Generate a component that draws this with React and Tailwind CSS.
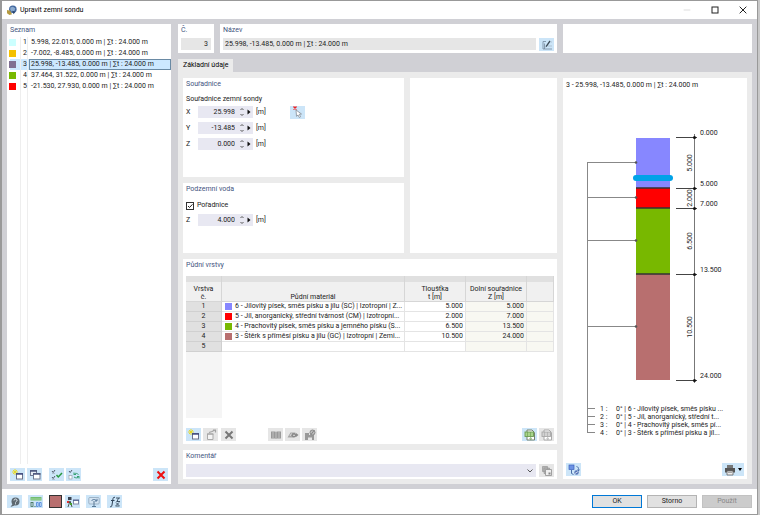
import { clsx } from "clsx"

const probes = [
  { no: 1, color: "bg-[#ccffff]", label: "5.998, 22.015, 0.000 m | ∑t : 24.000 m" },
  { no: 2, color: "bg-[#f5c000]", label: "-7.002, -8.485, 0.000 m | ∑t : 24.000 m" },
  { no: 3, color: "bg-[#7f6e92]", label: "25.998, -13.485, 0.000 m | ∑t : 24.000 m" },
  { no: 4, color: "bg-[#78b800]", label: "37.464, 31.522, 0.000 m | ∑t : 24.000 m" },
  { no: 5, color: "bg-[#ff0000]", label: "-21.530, 27.930, 0.000 m | ∑t : 24.000 m" },
]

const layers = [
  { color: "bg-[#8787ff]", material: "6 - Jílovitý písek, směs písku a jílu (SC) | Izotropní | Z...", t: "5.000", z: "5.000" },
  { color: "bg-[#ff0000]", material: "5 - Jíl, anorganický, střední tvárnost (CM) | Izotropní...", t: "2.000", z: "7.000" },
  { color: "bg-[#78b800]", material: "4 - Prachovitý písek, směs písku a jemného písku (S...", t: "6.500", z: "13.500" },
  { color: "bg-[#b86f6f]", material: "3 - Štěrk s příměsí písku a jílu (GC) | Izotropní | Zemi...", t: "10.500", z: "24.000" },
]

function Svg({ children, size = "h-3 w-3" }) {
  return (
    <svg viewBox="0 0 12 12" className={size} fill="none" aria-hidden="true">
      {children}
    </svg>
  )
}

function ToolButton({ label, disabled, wide, children }) {
  return (
    <button
      type="button"
      aria-label={label}
      disabled={disabled}
      className={clsx(
        "flex h-[13px] shrink-0 items-center justify-center",
        wide ? "w-[22px]" : "w-[15px]",
        disabled ? "bg-[#e6e6e6]" : "bg-[#cce5f8]"
      )}
    >
      {children}
    </button>
  )
}

function Card({ title, className, children }) {
  return (
    <section className={clsx("flex flex-col bg-white px-[3px]", className)}>
      {title && <h2 className="mt-px h-[10px] leading-[10px] text-[#3f5580]">{title}</h2>}
      {children}
    </section>
  )
}

const NewIcon = () => (
  <Svg>
    <path d="M3 0v6M0 3h6M1 1l4 4M5 1l-4 4" stroke="#e8d820" strokeWidth=".9" />
    <rect x="4.5" y="4.5" width="6" height="5.5" fill="#fff" stroke="#6a7088" />
    <path d="M4 5h7" stroke="#38447e" strokeWidth="1.4" />
  </Svg>
)

const NewFromIcon = () => (
  <Svg>
    <path d="M2.500 5h5.500v5.500H2.500z" fill="#f4f4f4" stroke="#aaa" />
    <path d="M2 5h6.500M4 3.500l3-1 3-1.500M8 1h2.500v2.500" stroke="#a2a2a2" strokeWidth="1.200" />
  </Svg>
)

const CopyIcon = () => (
  <Svg>
    <rect x="1.500" y="1.500" width="6" height="5" fill="#e8edf4" stroke="#707890" />
    <path d="M1 2h7" stroke="#44507a" strokeWidth="1.400" />
    <rect x="4.500" y="4.500" width="6.500" height="5.500" fill="#fff" stroke="#707890" />
    <path d="M4 5h7.500" stroke="#44507a" strokeWidth="1.400" />
  </Svg>
)

const CheckAllIcon = () => (
  <Svg>
    <path d="M1 2l1.200 1.500L4 1M1 8l1.200 1.500L4 7" stroke="#505868" />
    <path d="M1 4.500h3M1 10.500h3" stroke="#9aa6b4" strokeWidth=".6" />
    <path d="M5.500 6l1.800 2L11 4" stroke="#2a9a40" strokeWidth="1.500" />
  </Svg>
)

const CheckSwapIcon = () => (
  <Svg>
    <path d="M1 2l1.200 1.500L4 1" stroke="#505868" />
    <rect x="1" y="6.500" width="3" height="3.500" fill="#fff" stroke="#98a2ac" strokeWidth=".7" />
    <path d="M6 5.500c1.500-2 3-1 4.500 0M11 7.500c-1 2-3.500 1.500-5 .5M6 3.500v2h2M11 9.500v-2H9" stroke="#35a070" />
  </Svg>
)

const CrossIcon = ({ color }) => (
  <Svg>
    <path d="M2.500 2.500l7 7M9.500 2.500l-7 7" stroke={color} strokeWidth="2" />
  </Svg>
)

const BookIcon = () => (
  <Svg>
    <path d="M1 2.500h4l1 .5 1-.5h4v7H7l-1 .5-1-.5H1z" fill="#999" />
    <path d="M6 3v7M3 3v6M9 3v6" stroke="#ddd" strokeWidth=".6" />
  </Svg>
)

const EditMatIcon = () => (
  <Svg>
    <path d="M.5 8.500l3-5h5l-2 5z" fill="#a5a5a5" />
    <circle cx="7" cy="6.300" r="2.300" fill="#8a8a8a" />
    <path d="M9 4l2.500 2L9 8z" fill="#8a8a8a" />
    <path d="M3 7l1.500-2.500M6 6.300h2" stroke="#ddd" />
  </Svg>
)

const ImportIcon = () => (
  <Svg>
    <path d="M1 4h4v2h5v5H8V8.500H4V11H1z" fill="#999" />
    <circle cx="8.500" cy="3.500" r="2.500" fill="#bbb" stroke="#8c8c8c" />
    <path d="M6.500 6l4-5" stroke="#888" />
  </Svg>
)

const SheetIcon = ({ active }) => (
  <Svg>
    <path d="M3 1h5l2.500 2.500V11H3z" fill="#fff" stroke={active ? "#76836f" : "#aaa"} />
    <rect x="1" y="3" width="8.500" height="4.500" fill={active ? "#a8d48c" : "#d2d2d2"} stroke={active ? "#6a9c50" : "#a8a8a8"} strokeWidth=".9" />
    <path d="M3.500 3v4.500M6.500 3v4.500" stroke={active ? "#6a9c50" : "#a8a8a8"} strokeWidth=".6" />
    <path d="M6.700 8v2.500M5.500 9.300l1.200 1.200L8 9.300" stroke={active ? "#6a9c50" : "#a8a8a8"} strokeWidth=".7" />
  </Svg>
)

const StackIcon = () => (
  <Svg>
    <path d="M1.500 1.500h5v5h-5zM3 3h5.500v5.500H3z" fill="#b4b4b4" stroke="#989898" strokeWidth=".7" />
    <path d="M4.500 4.500h6v6h-6z" fill="#eee" stroke="#999" strokeWidth=".9" />
    <rect x="7.500" y="7.500" width="2" height="2" fill="#888" />
  </Svg>
)

const EditIcon = () => (
  <Svg>
    <path d="M5 2.500H2v7.500h9M3.500 10V4.500" stroke="#73899c" strokeWidth=".8" />
    <path d="M4.500 8.500l.5-2L8.500 1.500l1 1L6 7.500z" fill="#3e4c58" />
    <path d="M9.500 3h1.500M7 7h4" stroke="#a4b6c4" strokeWidth=".7" />
  </Svg>
)

const PickIcon = () => (
  <Svg>
    <path d="M1.500.5l3 3M4.500.5l-3 3" stroke="#f02020" strokeWidth="1.400" />
    <path d="M4 4l5.500 4-2.300.3 1.400 2.400-1.300.8L6 9l-1.500 1.300z" fill="#fff" stroke="#848c96" strokeWidth=".8" />
  </Svg>
)

const RotateIcon = () => (
  <Svg>
    <rect x="1" y="1" width="5" height="4.500" fill="#6c92e4" stroke="#3a60bc" strokeWidth=".7" />
    <path d="M3.500 6v3.500l2 1M8.500 2.500c2 .5 2 1.500 2 3" stroke="#4a6ea8" />
    <path d="M9 5.500h3L10.500 7.500z" fill="#4a6ea8" />
    <circle cx="8.500" cy="8.500" r="2.200" fill="#5876b8" />
    <path d="M7 9.500l3-2" stroke="#fff" strokeWidth=".7" />
  </Svg>
)

const PrintIcon = () => (
  <Svg>
    <path d="M3 1h6v3H3z" fill="#777" />
    <path d="M1 4h10v4.500H1z" fill="#555" />
    <path d="M3 7h6v4H3z" fill="#eee" stroke="#666" strokeWidth=".8" />
    <path d="M4 8.500h4" stroke="#888" strokeWidth=".7" />
  </Svg>
)

const HelpIcon = () => (
  <Svg>
    <circle cx="6.500" cy="5.500" r="4" fill="#5d6870" />
    <path d="M3.500 8l-2 3 4-1.500z" fill="#5d6870" />
    <path d="M5 4.500c0-2 3-2 3 0 0 1-1.500 1-1.500 2M6.500 7.300v1" stroke="#e8f2fa" />
  </Svg>
)

const UnitsIcon = () => (
  <Svg>
    <rect x=".5" y="1" width="11" height="3.500" fill="#72bd70" />
    <path d="M1 3h10" stroke="#a4d8a0" />
    <rect x="1" y="6.500" width="2" height="4" stroke="#3c6c50" strokeWidth=".8" />
    <path d="M4.500 10.500h1" stroke="#3c6c50" />
    <path d="M6.500 6.500h1.700v4H6.500zM9.500 6.500h1.700v4H9.500z" stroke="#4880d8" strokeWidth=".8" />
  </Svg>
)

const DisplayIcon = () => (
  <Svg>
    <path d="M1 1h3.500v3H1z" fill="#3a4250" />
    <path d="M1 11l2-6 2 6M1 5l4 3" stroke="#404a40" strokeWidth=".9" />
    <rect x="0" y="5" width="2" height="2" fill="#d83030" />
    <rect x="3" y="7" width="2" height="2" fill="#48a030" />
    <rect x="6.500" y="4" width="5" height="4" fill="#fff" stroke="#7e88a4" />
    <path d="M6 4.300h6" stroke="#4c5c90" />
  </Svg>
)

const ViewIcon = () => (
  <Svg>
    <rect x=".8" y="1.500" width="10.400" height="6.500" rx="1" fill="#d4e4f2" stroke="#8fa6ba" strokeWidth=".8" />
    <path d="M6 5v5M4 10.500h4" stroke="#587894" />
    <path d="M3.500 5c1-2 4-2 5 0M9 2.800V5H7" stroke="#486c90" strokeWidth=".9" />
  </Svg>
)

const FormulaIcon = () => (
  <Svg>
    <path d="M6 1.500C4.500.5 4 2 3.800 4L3 9c-.3 2-1 2-2 1.500M2 4.500h3.500" stroke="#2f4358" />
    <path d="M7 2h4M7.500 5.500H11M9.500 2L8 5.500M6.500 10h4M7 6.500l3 3M10 6.500l-3 3" stroke="#2f4358" strokeWidth=".9" />
  </Svg>
)

function TitleBar() {
  return (
    <header className="flex h-[18px] items-center bg-white pl-[5px]">
      <svg viewBox="0 0 12 12" className="h-[10px] w-[10px]" aria-hidden="true">
        <circle cx="7" cy="5" r="4.500" fill="#43689f" />
        <path d="M4 3l3-1 3 2-1 3-3 1-2-2z" fill="#8cabcf" />
        <path d="M0 6l4 1 2 4-3 1-3-2z" fill="#b59a40" />
        <path d="M6 7l4 1-2 3z" fill="#2b466e" />
      </svg>
      <h1 className="ml-[3px] flex-1 text-[7px] text-black">Upravit zemní sondu</h1>
      <button type="button" aria-label="Minimalizovat" className="flex w-7 justify-center">
        <Svg size="h-2 w-2"><path d="M1 6h10" stroke="#ccc" /></Svg>
      </button>
      <button type="button" aria-label="Maximalizovat" className="flex w-7 justify-center">
        <Svg size="h-2 w-2"><rect x="1.500" y="1.500" width="9" height="9" stroke="#222" strokeWidth="1.500" /></Svg>
      </button>
      <button type="button" aria-label="Zavřít" className="flex w-7 justify-center">
        <Svg size="h-2 w-2"><path d="M1 1l10 10M11 1L1 11" stroke="#222" strokeWidth="1.500" /></Svg>
      </button>
    </header>
  )
}

function ProbeList() {
  return (
    <Card title="Seznam" className="w-[164px] shrink-0">
      <ul className="mt-[2px] flex flex-1 flex-col">
        {probes.map((p) => (
          <li
            key={p.no}
            className={clsx("-mr-[3px] flex h-[11px] items-center", p.no === 3 && "bg-[#cce8ff]")}
          >
            <span className={clsx("-ml-px h-[7px] w-[7px]", p.color)} />
            <span className="ml-1 h-full w-2 border-x border-[#eeeeee] text-right leading-[11px]">{p.no}</span>
            <span
              className={clsx(
                "ml-px flex-1 border px-px leading-[9px] whitespace-nowrap",
                p.no === 3 ? "border-[#6a8aa4]" : "border-transparent"
              )}
            >
              {p.label}
            </span>
          </li>
        ))}
        <li aria-hidden="true" className="ml-[10px] w-2 flex-1 border-x border-[#eeeeee]" />
      </ul>
      <div className="mt-1 mb-[3px] flex">
        <div className="flex gap-[2px]">
          <ToolButton label="Nová sonda"><NewIcon /></ToolButton>
          <ToolButton label="Kopírovat"><CopyIcon /></ToolButton>
        </div>
        <div className="ml-[7px] flex gap-[2px]">
          <ToolButton label="Vybrat vše"><CheckAllIcon /></ToolButton>
          <ToolButton label="Obrátit výběr"><CheckSwapIcon /></ToolButton>
        </div>
        <div className="ml-auto">
          <ToolButton label="Smazat"><CrossIcon color="#ee1010" /></ToolButton>
        </div>
      </div>
    </Card>
  )
}

function NumberRow({ id, label, value, children }) {
  return (
    <div className="flex h-3 items-center">
      <label htmlFor={id} className="w-3">{label}</label>
      <div className="flex h-3 w-[55px] items-center bg-[#e8e8f2]">
        <input
          id={id}
          defaultValue={value}
          className="h-3 w-[37px] bg-transparent text-right outline-none"
        />
        <button type="button" aria-label={`${label} nahoru nebo dolů`} className="ml-[5px] h-2 w-1">
          <svg viewBox="0 0 4 8" className="h-2 w-1" fill="none" stroke="#555">
            <path d="M.5 2l1.500-1.500L3.500 2M.5 6l1.500 1.500L3.500 6" />
          </svg>
        </button>
        <button type="button" aria-label={`${label} možnosti`} className="ml-[3px] h-2 w-1">
          <svg viewBox="0 0 4 8" className="h-2 w-1"><path d="M.5 1.500L3.500 4 .5 6.500z" fill="#111" /></svg>
        </button>
      </div>
      <span className="ml-[3px] w-[34px]">[m]</span>
      {children}
    </div>
  )
}

function LayersCard() {
  const cell = "border-r border-b border-[#e4e4e4] py-0"
  const head = "border-r border-b border-[#d6d6d6] p-0 font-normal leading-[8px] whitespace-nowrap"
  const rowHead = "border-r border-b border-[#d0d0d0] bg-[#e0e0e0] py-0 font-normal"
  return (
    <Card title="Půdní vrstvy" className="flex-1">
      <div className="mt-[6px] flex flex-1 flex-col">
        <table className="w-full table-fixed border-separate border-spacing-0 leading-[9px]">
          <colgroup>
            <col className="w-9" />
            <col />
            <col className="w-[61px]" />
            <col className="w-[61px]" />
            <col className="w-[27px]" />
          </colgroup>
          <thead>
            <tr className="h-[6px] bg-[#e0e0e0]">
              {[0, 1, 2, 3, 4].map((i) => (
                <td key={i} className="border-r border-[#d6d6d6] p-0" />
              ))}
            </tr>
            <tr className="h-5 bg-[#f0f0f0] align-bottom">
              <th className={head}>Vrstva<br />č.</th>
              <th className={head}>Půdní materiál</th>
              <th className={head}>Tloušťka<br />t [m]</th>
              <th className={head}>Dolní souřadnice<br />Z [m]</th>
              <th className={head} />
            </tr>
          </thead>
          <tbody>
            {layers.map((l, i) => (
              <tr key={l.material} className="h-[10px]">
                <th className={rowHead}>{i + 1}</th>
                <td className={clsx(cell, "pl-[3px]")}>
                  <div className="flex items-center whitespace-nowrap">
                    <span className={clsx("h-[7px] w-[7px] shrink-0", l.color)} />
                    <span className="ml-[3px]">{l.material}</span>
                  </div>
                </td>
                <td className={clsx(cell, "pr-[2px] text-right")}>{l.t}</td>
                <td className={clsx(cell, "bg-[#f8f8f2] pr-[2px] text-right")}>{l.z}</td>
                <td className={clsx(cell, "bg-[#f8f8f2]")} />
              </tr>
            ))}
            <tr className="h-[10px]">
              <th className={rowHead}>5</th>
              <td className={cell} />
              <td className={cell} />
              <td className={clsx(cell, "bg-[#f8f8f2]")} />
              <td className={clsx(cell, "bg-[#f8f8f2]")} />
            </tr>
          </tbody>
        </table>
        <div className="w-9 flex-1 bg-[#f5f5f5]" />
      </div>
      <div className="mt-[10px] mb-[3px] flex">
        <div className="flex gap-[2px]">
          <ToolButton label="Nová vrstva"><NewIcon /></ToolButton>
          <ToolButton label="Vložit vrstvu" disabled><NewFromIcon /></ToolButton>
        </div>
        <div className="ml-[3px]">
          <ToolButton label="Smazat vrstvu" disabled><CrossIcon color="#777" /></ToolButton>
        </div>
        <div className="ml-8 flex gap-[2px]">
          <ToolButton label="Knihovna" disabled><BookIcon /></ToolButton>
          <ToolButton label="Nový materiál" disabled><EditMatIcon /></ToolButton>
          <ToolButton label="Upravit materiál" disabled><ImportIcon /></ToolButton>
        </div>
        <div className="ml-auto flex gap-[2px]">
          <ToolButton label="Export do tabulky"><SheetIcon active /></ToolButton>
          <ToolButton label="Import z tabulky" disabled><SheetIcon /></ToolButton>
        </div>
      </div>
    </Card>
  )
}

// 24 m deep profile, about 10 px per metre
const strata = [
  { top: 18, bottom: 68, fill: "#8787ff", t: "5.000" },
  { top: 68, bottom: 88, fill: "#ff0000", t: "2.000" },
  { top: 88, bottom: 154, fill: "#78b800", t: "6.500" },
  { top: 154, bottom: 260, fill: "#b86f6f", t: "10.500" },
]

const levels = [
  { y: 17, label: "0.000" },
  { y: 68, label: "5.000" },
  { y: 88, label: "7.000" },
  { y: 154, label: "13.500" },
  { y: 260, label: "24.000" },
]

const legend = [
  "0° | 6 - Jílovitý písek, směs písku ...",
  "0° | 5 - Jíl, anorganický, střední t...",
  "0° | 4 - Prachovitý písek, směs pí...",
  "0° | 3 - Štěrk s příměsí písku a jíl...",
]

function ProfileDrawing() {
  return (
    <svg viewBox="0 0 178 320" className="h-[320px] w-[178px]" fill="#222" fontSize="7">
      {strata.map((s) => (
        <rect key={s.top} x="70" y={s.top} width="34" height={s.bottom - s.top} fill={s.fill} />
      ))}
      <path d="M70 68h34M70 88h34M70 154h34" stroke="#333" strokeWidth="1.500" />
      <path d="M70 58h34" stroke="#00a2e8" strokeWidth="6" strokeLinecap="round" />

      <path d="M21.500 42V313" stroke="#888" />
      {strata.map((s) => {
        const mid = Math.floor((s.top + s.bottom) / 2)
        return (
          <g key={s.top}>
            <path d={`M21 ${mid - 0.5}h49`} stroke="#888" />
            <circle cx="70" cy={mid - 0.5} r="1.300" fill="#555" />
            <text transform={`translate(126 ${mid}) rotate(-90)`} textAnchor="middle">{s.t}</text>
          </g>
        )
      })}

      <path d="M128.500 14V263" stroke="#777" />
      {levels.map((l) => (
        <g key={l.label}>
          <path d={`M110 ${l.y + 0.5}h21`} stroke="#444" />
          <circle cx="128.500" cy={l.y + 0.5} r="1.500" fill="#111" />
          <text x="134" y={l.y - 2}>{l.label}</text>
        </g>
      ))}

      {legend.map((text, i) => (
        <g key={text}>
          <path d={`M21 ${288.5 + i * 8}h8`} stroke="#888" />
          <text x="34" y={291 + i * 8}>{i + 1} :</text>
          <text x="50" y={291 + i * 8}>{text}</text>
        </g>
      ))}
    </svg>
  )
}

function Preview() {
  return (
    <Card className="w-[184px] shrink-0">
      <p className="mt-[3px] mb-[31px] h-2 leading-[8px] whitespace-nowrap">3 - 25.998, -13.485, 0.000 m | ∑t : 24.000 m</p>
      <ProfileDrawing />
      <div className="mt-auto mb-[3px] flex justify-between">
        <ToolButton label="Otočit pohled"><RotateIcon /></ToolButton>
        <ToolButton label="Tisk" wide>
          <PrintIcon />
          <svg viewBox="0 0 4 3" className="ml-[2px] h-[3px] w-1"><path d="M0 0h4L2 3z" /></svg>
        </ToolButton>
      </div>
    </Card>
  )
}

function Footer() {
  const button = "h-[13px] w-[50px] border text-center leading-[11px]"
  return (
    <footer className="flex h-[25px] items-center bg-white px-[5px]">
      <ToolButton label="Nápověda"><HelpIcon /></ToolButton>
      <div className="ml-[6px]">
        <ToolButton label="Jednotky"><UnitsIcon /></ToolButton>
      </div>
      <button type="button" aria-label="Barva" className="ml-[6px] h-[13px] w-[13px] border border-[#333] bg-[#b86f6f]" />
      <div className="ml-[3px] flex gap-[6px]">
        <ToolButton label="Zobrazení"><DisplayIcon /></ToolButton>
        <ToolButton label="Pohled"><ViewIcon /></ToolButton>
        <ToolButton label="Vzorec"><FormulaIcon /></ToolButton>
      </div>
      <div className="ml-auto flex gap-[5px]">
        <button type="button" className={clsx(button, "border-[#0078d7] bg-[#e1e1e1]")}>OK</button>
        <button type="button" className={clsx(button, "border-[#b4b4b4] bg-[#e1e1e1]")}>Storno</button>
        <button type="button" disabled className={clsx(button, "border-[#c2c2c2] bg-[#cccccc] text-[#888888]")}>Použít</button>
      </div>
    </footer>
  )
}

export default function App() {
  return (
    <div className="flex min-h-screen bg-[#c8c8c8] pr-[2px] font-['Roboto','Open_Sans',sans-serif] text-[7px] text-[#222222]">
      <div className="flex flex-1 flex-col border border-l-2 border-[#999999]">
        <TitleBar />
        <main className="flex flex-1 gap-[7px] bg-[#d0d0d5] p-[5px]">
          <ProbeList />
          <div className="flex min-w-0 flex-1 flex-col">
            <div className="flex h-[29px] gap-[6px]">
              <Card className="w-9">
                <label htmlFor="no" className="mt-px h-[10px] leading-[10px] text-[#3f5580]">Č.</label>
                <input id="no" readOnly value="3" className="mt-[3px] h-3 w-full bg-[#e6e6e6] pr-[3px] text-right outline-none" />
              </Card>
              <Card className="min-w-0 flex-1">
                <label htmlFor="name" className="mt-px h-[10px] leading-[10px] text-[#3f5580]">Název</label>
                <div className="mt-[3px] flex gap-[3px]">
                  <input
                    id="name"
                    readOnly
                    value="25.998, -13.485, 0.000 m | ∑t : 24.000 m"
                    className="h-3 min-w-0 flex-1 bg-[#e6e6e6] px-[2px] outline-none"
                  />
                  <ToolButton label="Upravit název"><EditIcon /></ToolButton>
                </div>
              </Card>
              <Card className="w-[189px]" />
            </div>

            <div role="tablist" className="mt-[6px] flex">
              <button type="button" role="tab" aria-selected="true" className="h-[13px] bg-[#ebebeb] px-[5px] leading-[13px] text-black">
                Základní údaje
              </button>
            </div>

            <div className="flex flex-1 gap-[6px] bg-[#ebebeb] px-[5px] pt-[6px] pb-[5px]">
              <div className="flex min-w-0 flex-1 flex-col gap-[6px]">
                <div className="flex gap-[6px]">
                  <div className="flex flex-1 flex-col gap-[6px]">
                    <Card title="Souřadnice" className="h-[99px]">
                      <p className="mt-[5px] mb-[2px] h-[10px] leading-[10px]">Souřadnice zemní sondy</p>
                      <div className="flex flex-col gap-1">
                        <NumberRow id="x" label="X" value="25.998">
                          <ToolButton label="Vybrat bod"><PickIcon /></ToolButton>
                        </NumberRow>
                        <NumberRow id="y" label="Y" value="-13.485" />
                        <NumberRow id="z" label="Z" value="0.000" />
                      </div>
                    </Card>
                    <Card title="Podzemní voda" className="h-[70px]">
                      <label className="mt-[7px] mb-1 flex h-[9px] items-center gap-[3px]">
                        <span className="grid">
                          <input
                            type="checkbox"
                            defaultChecked
                            className="peer col-start-1 row-start-1 h-2 w-2 appearance-none border border-[#333333] bg-white"
                          />
                          <svg
                            viewBox="0 0 8 8"
                            fill="none"
                            className="pointer-events-none invisible col-start-1 row-start-1 h-2 w-2 peer-checked:visible"
                          >
                            <path d="M2 4l1.500 1.500L6.500 2.300" stroke="#222" />
                          </svg>
                        </span>
                        Pořadnice
                      </label>
                      <NumberRow id="water" label="Z" value="4.000" />
                    </Card>
                  </div>
                  <Card className="w-[147px]" />
                </div>
                <LayersCard />
                <Card className="h-[29px]">
                  <label htmlFor="comment" className="mt-px h-[10px] leading-[10px] text-[#3f5580]">Komentář</label>
                  <div className="mt-[3px] flex gap-[3px]">
                    <div className="grid flex-1 items-center">
                      <select id="comment" className="col-start-1 row-start-1 h-[13px] w-full appearance-none bg-[#e8e8f2] outline-none">
                        <option></option>
                      </select>
                      <svg viewBox="0 0 6 4" fill="none" className="pointer-events-none col-start-1 row-start-1 mr-[3px] h-1 w-[6px] justify-self-end">
                        <path d="M.5.5L3 3 5.500.5" stroke="#555" />
                      </svg>
                    </div>
                    <ToolButton label="Komentáře" disabled><StackIcon /></ToolButton>
                  </div>
                </Card>
              </div>
              <Preview />
            </div>
          </div>
        </main>
        <Footer />
      </div>
    </div>
  )
}
